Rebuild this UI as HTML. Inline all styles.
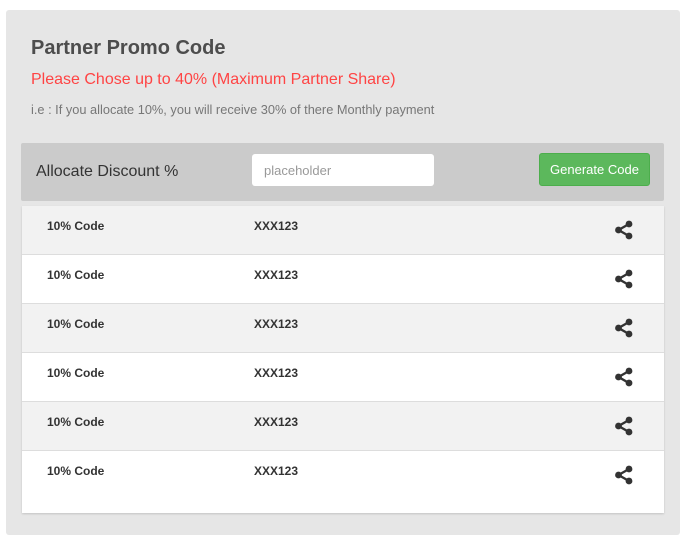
<!DOCTYPE html>
<html><head><style>
body{margin:0;width:686px;height:541px;background:#fff;font-family:"Liberation Sans",sans-serif;position:relative;overflow:hidden}
.panel{position:absolute;left:6px;top:10px;width:674px;height:525px;background:#e6e6e6;border-radius:3px}
.t{position:absolute;white-space:nowrap}
.bar{position:absolute;left:21px;top:143px;width:643px;height:58px;background:#cbcbcb;border-radius:2px}
.inp{position:absolute;left:252px;top:154px;width:182px;height:32px;background:#fff;border-radius:3px}
.btn{position:absolute;left:539px;top:153px;width:111px;height:33px;background:#5cb85c;border:1px solid #4cae4c;box-sizing:border-box;border-radius:3px;color:#fff;font-size:13px;text-align:center;line-height:31px}
.tbl{position:absolute;left:22px;top:206px;width:642px;height:307px;background:#fff;box-shadow:0 1px 2px rgba(0,0,0,.15)}
.row{position:absolute;left:0;width:642px;height:49px;border-bottom:1px solid #ddd;box-sizing:border-box;font-size:12px;font-weight:bold;color:#333}
.row span{position:absolute;top:13px}
.row svg{position:absolute;left:592px;top:14px}
</style></head><body>
<div class="panel"></div>
<div class="t" style="left:31px;top:37px;font-size:20px;font-weight:bold;color:#4d4d4d">Partner Promo Code</div>
<div class="t" style="left:31px;top:71px;font-size:16px;color:#f44">Please Chose up to 40% (Maximum Partner Share)</div>
<div class="t" style="left:31px;top:102px;font-size:12.8px;color:#777">i.e : If you allocate 10%, you will receive 30% of there Monthly payment</div>
<div class="bar"></div>
<div class="t" style="left:36px;top:163px;font-size:16px;color:#333">Allocate Discount %</div>
<div class="inp"></div>
<div class="t" style="left:264px;top:163px;font-size:13px;color:#999">placeholder</div>
<div class="btn">Generate Code</div>
<div class="tbl">
<div class="row" style="top:0;background:#f2f2f2"><span style="left:25px">10% Code</span><span style="left:232px">XXX123</span><svg width="20" height="20" viewBox="0 0 20 20"><g fill="#333"><circle cx="15" cy="4" r="3.4"/><circle cx="4.5" cy="10" r="3.4"/><circle cx="15" cy="16" r="3.4"/></g><path d="M4.5 10L15 4M4.5 10L15 16" stroke="#333" stroke-width="2.4"/></svg></div>
<div class="row" style="top:49px;background:#fff"><span style="left:25px">10% Code</span><span style="left:232px">XXX123</span><svg width="20" height="20" viewBox="0 0 20 20"><g fill="#333"><circle cx="15" cy="4" r="3.4"/><circle cx="4.5" cy="10" r="3.4"/><circle cx="15" cy="16" r="3.4"/></g><path d="M4.5 10L15 4M4.5 10L15 16" stroke="#333" stroke-width="2.4"/></svg></div>
<div class="row" style="top:98px;background:#f2f2f2"><span style="left:25px">10% Code</span><span style="left:232px">XXX123</span><svg width="20" height="20" viewBox="0 0 20 20"><g fill="#333"><circle cx="15" cy="4" r="3.4"/><circle cx="4.5" cy="10" r="3.4"/><circle cx="15" cy="16" r="3.4"/></g><path d="M4.5 10L15 4M4.5 10L15 16" stroke="#333" stroke-width="2.4"/></svg></div>
<div class="row" style="top:147px;background:#fff"><span style="left:25px">10% Code</span><span style="left:232px">XXX123</span><svg width="20" height="20" viewBox="0 0 20 20"><g fill="#333"><circle cx="15" cy="4" r="3.4"/><circle cx="4.5" cy="10" r="3.4"/><circle cx="15" cy="16" r="3.4"/></g><path d="M4.5 10L15 4M4.5 10L15 16" stroke="#333" stroke-width="2.4"/></svg></div>
<div class="row" style="top:196px;background:#f2f2f2"><span style="left:25px">10% Code</span><span style="left:232px">XXX123</span><svg width="20" height="20" viewBox="0 0 20 20"><g fill="#333"><circle cx="15" cy="4" r="3.4"/><circle cx="4.5" cy="10" r="3.4"/><circle cx="15" cy="16" r="3.4"/></g><path d="M4.5 10L15 4M4.5 10L15 16" stroke="#333" stroke-width="2.4"/></svg></div>
<div class="row" style="top:245px;background:#fff;border-bottom:none"><span style="left:25px">10% Code</span><span style="left:232px">XXX123</span><svg width="20" height="20" viewBox="0 0 20 20"><g fill="#333"><circle cx="15" cy="4" r="3.4"/><circle cx="4.5" cy="10" r="3.4"/><circle cx="15" cy="16" r="3.4"/></g><path d="M4.5 10L15 4M4.5 10L15 16" stroke="#333" stroke-width="2.4"/></svg></div>
</div>
</body></html>
